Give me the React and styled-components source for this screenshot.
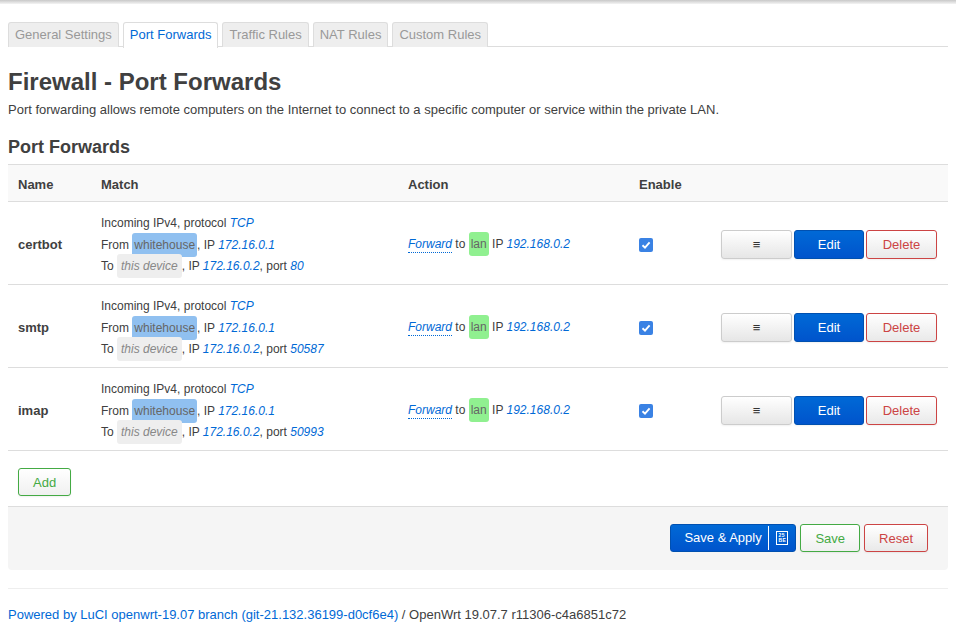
import React from 'react'
import styled, { createGlobalStyle } from 'styled-components'

const GlobalStyle = createGlobalStyle`
  html, body {
    margin: 0;
    padding: 0;
    background: #fff;
  }
  body {
    font-family: "Liberation Sans", Arial, sans-serif;
    font-size: 13px;
    color: #404040;
  }
`

const rules = [
  { name: 'certbot', port: '80' },
  { name: 'smtp', port: '50587' },
  { name: 'imap', port: '50993' },
]

const tabs = ['General Settings', 'Port Forwards', 'Traffic Rules', 'NAT Rules', 'Custom Rules']

const columns = [
  { title: 'Name', width: 83 },
  { title: 'Match', width: 307 },
  { title: 'Action', width: 231 },
  { title: 'Enable', width: 82 },
  { title: '', width: 237 },
]

export default function App() {
  return (
    <Page>
      <GlobalStyle />
      <TopShadow />
      <Content>
        <Tabs>
          {tabs.map((t) => (
            <Tab key={t} active={t === 'Port Forwards'}>
              {t}
            </Tab>
          ))}
        </Tabs>

        <Title>Firewall - Port Forwards</Title>
        <Description>
          Port forwarding allows remote computers on the Internet to connect to a specific computer or
          service within the private LAN.
        </Description>

        <SectionTitle>Port Forwards</SectionTitle>

        <Table>
          <colgroup>
            {columns.map((c, i) => (
              <col key={i} style={{ width: c.width }} />
            ))}
          </colgroup>
          <thead>
            <tr>
              {columns.map((c, i) => (
                <Th key={i}>{c.title}</Th>
              ))}
            </tr>
          </thead>
          <tbody>
            {rules.map((r) => (
              <tr key={r.name}>
                <NameCell>{r.name}</NameCell>
                <MatchCell>
                  <MatchLine>
                    Incoming IPv4, protocol <Var>TCP</Var>
                  </MatchLine>
                  <MatchLine>
                    From <Zone color="#90c0f0">whitehouse</Zone>, IP <Var>172.16.0.1</Var>
                  </MatchLine>
                  <MatchLine>
                    To <Zone color="#eeeeee" italic>this device</Zone>, IP <Var>172.16.0.2</Var>, port{' '}
                    <Var>{r.port}</Var>
                  </MatchLine>
                </MatchCell>
                <Td>
                  <ActionLine>
                    <Abbr>Forward</Abbr> to <Zone color="#90f090">lan</Zone> IP <Var>192.168.0.2</Var>
                  </ActionLine>
                </Td>
                <Td>
                  <Check>
                    <svg width="10" height="10" viewBox="0 0 10 10">
                      <path d="M1.5 5.2 L4 7.6 L8.6 2.4" stroke="#fff" strokeWidth="1.9" fill="none" />
                    </svg>
                  </Check>
                </Td>
                <ButtonCell>
                  <RowButtons>
                    <Button variant="neutral" width={71}>≡</Button>
                    <Button variant="primary" width={70}>Edit</Button>
                    <Button variant="negative" width={71}>Delete</Button>
                  </RowButtons>
                </ButtonCell>
              </tr>
            ))}
          </tbody>
        </Table>

        <AddRow>
          <Button variant="add" small>
            Add
          </Button>
        </AddRow>

        <ActionsPanel>
          <ApplyButton>
            <ApplyLabel>Save &amp; Apply</ApplyLabel>
            <ApplyDrop>
              <Tofu>
                <span>25</span>
                <span>BE</span>
              </Tofu>
            </ApplyDrop>
          </ApplyButton>
          <Button variant="add" small>
            Save
          </Button>
          <Button variant="negative" small>
            Reset
          </Button>
        </ActionsPanel>

        <Rule />
        <Footer>
          <FooterLink>Powered by LuCI openwrt-19.07 branch (git-21.132.36199-d0cf6e4)</FooterLink> /
          OpenWrt 19.07.7 r11306-c4a6851c72
        </Footer>
      </Content>
    </Page>
  )
}

const Page = styled.div`
  min-height: 628px;
`

const TopShadow = styled.div`
  height: 4px;
  background: linear-gradient(#c8c8c8, #f4f4f4);
`

const Content = styled.div`
  padding: 18px 8px 0 8px;
`

const Tabs = styled.ul`
  display: flex;
  gap: 4px;
  margin: 0;
  padding: 0;
  list-style: none;
  border-bottom: 1px solid #ddd;
  height: 24px;
`

const Tab = styled.li`
  line-height: 24px;
  padding: 0 6px;
  border: 1px solid #ddd;
  border-bottom: none;
  border-radius: 3px 3px 0 0;
  background: ${(p) => (p.active ? '#fff' : '#eee')};
  color: ${(p) => (p.active ? '#0069d6' : '#999')};
  height: ${(p) => (p.active ? '25px' : '24px')};
  font-size: 13px;
`

const Title = styled.h2`
  margin: 20px 0 0 0;
  font-size: 24px;
  line-height: 30px;
  font-weight: bold;
  color: #404040;
`

const Description = styled.p`
  margin: 4px 0 0 0;
  line-height: 18px;
`

const SectionTitle = styled.h3`
  margin: 16px 0 0 0;
  font-size: 18px;
  line-height: 24px;
  font-weight: bold;
`

const Table = styled.table`
  margin-top: 5px;
  width: 940px;
  table-layout: fixed;
  border-collapse: collapse;
  border-top: 1px solid #ddd;
`

const Th = styled.th`
  height: 37px;
  box-sizing: border-box;
  padding: 2px 10px 0;
  text-align: left;
  font-weight: bold;
  font-size: 13px;
  background: #f9f9f9;
  border-bottom: 1px solid #ddd;
`

const Td = styled.td`
  height: 83px;
  box-sizing: border-box;
  padding: 2px 10px 0;
  vertical-align: middle;
  border-bottom: 1px solid #ddd;
  font-size: 12px;
`

const NameCell = styled(Td)`
  font-weight: bold;
  font-size: 13px;
`

const MatchCell = styled(Td)`
  padding-top: 5px;
`

const ButtonCell = styled(Td)`
  padding-right: 11px;
`

const MatchLine = styled.div`
  line-height: 21.5px;
`

const ActionLine = styled.div`
  line-height: 21px;
`

const Var = styled.em`
  color: #0069d6;
  font-style: italic;
`

const Abbr = styled.span`
  color: #0069d6;
  font-style: italic;
  border-bottom: 1px dotted #0069d6;
  padding-bottom: 1px;
`

const Zone = styled.span`
  background: ${(p) => p.color};
  color: ${(p) => (p.italic ? '#888' : '#666')};
  font-style: ${(p) => (p.italic ? 'italic' : 'normal')};
  padding: 5px ${(p) => (p.italic ? '4px' : '2px')};
  border-radius: 3px;
`

const Check = styled.span`
  display: inline-flex;
  align-items: center;
  justify-content: center;
  width: 14px;
  height: 14px;
  border-radius: 2px;
  background: #3a82e4;
  margin-top: 3px;
`

const RowButtons = styled.div`
  display: flex;
  justify-content: flex-end;
  gap: 2px;
`

const variants = {
  neutral: 'background: linear-gradient(#fff, #e6e6e6); border-color: #ccc; color: #333;',
  primary: 'background: linear-gradient(#0069d6, #0054cc); border-color: #0050b0; color: #fff;',
  negative: 'background: linear-gradient(#fff, #e9e9e9); border-color: #c44; color: #c44;',
  add: 'background: linear-gradient(#fff, #f0f0f0); border-color: #4a4; color: #4a4;',
}

const Button = styled.button`
  font-family: "Liberation Sans", Arial, sans-serif;
  font-size: 13px;
  height: ${(p) => (p.small ? '28px' : '29px')};
  width: ${(p) => (p.width ? `${p.width}px` : 'auto')};
  padding: 0 ${(p) => (p.small ? '14px' : '6px')};
  border: 1px solid;
  border-radius: 3px;
  box-shadow: 0 1px 2px rgba(0, 0, 0, 0.06);
  ${(p) => variants[p.variant]}
`

const AddRow = styled.div`
  margin-top: 17px;
  padding-left: 10px;
  height: 28px;
`

const ActionsPanel = styled.div`
  margin-top: 10px;
  background: #f5f5f5;
  border-top: 1px solid #ddd;
  border-radius: 0 0 4px 4px;
  padding: 17px 20px 18px;
  display: flex;
  justify-content: flex-end;
  gap: 4px;
  width: 900px;
`

const ApplyButton = styled.div`
  display: flex;
  height: 28px;
  border-radius: 3px;
  border: 1px solid #0050b0;
  background: linear-gradient(#0069d6, #0054cc);
  color: #fff;
  box-sizing: border-box;
  width: 126px;
`

const ApplyLabel = styled.span`
  width: 98px;
  box-sizing: border-box;
  padding-left: 13px;
  border-right: 1px solid #fff;
  margin: 1px 0;
  line-height: 24px;
`

const ApplyDrop = styled.span`
  flex: 1;
  display: flex;
  align-items: center;
  justify-content: center;
`

const Tofu = styled.span`
  display: flex;
  flex-direction: column;
  border: 1px solid #fff;
  font-size: 5px;
  line-height: 5px;
  font-weight: bold;
  padding: 1px;
  letter-spacing: 0.5px;
`

const Rule = styled.hr`
  margin: 18px 0 0 0;
  border: none;
  border-top: 1px solid #eee;
  width: 940px;
`

const Footer = styled.p`
  margin: 17px 0 0 0;
  line-height: 18px;
`

const FooterLink = styled.a`
  color: #0069d6;
  text-decoration: none;
`
